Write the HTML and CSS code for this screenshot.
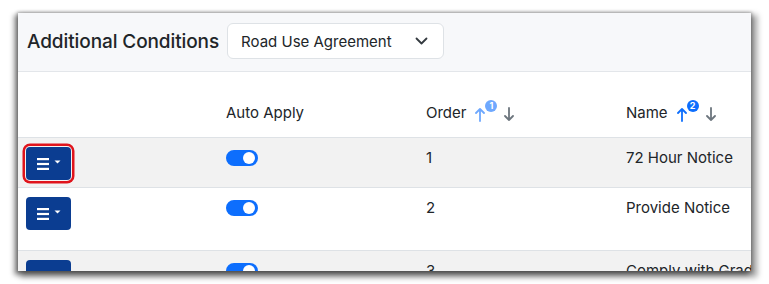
FILE: index.html
```html
<!DOCTYPE html>
<html>
<head>
<meta charset="utf-8">
<link rel="stylesheet" href="styles.css">
</head>
<body>
<div class="frame">
  <div class="card-header">
    <h2 class="title">Additional Conditions</h2>
    <div class="select">
      <span>Road Use Agreement</span>
      <svg class="chev" width="13" height="8" viewBox="0 0 13 8"><path d="M1.5 1.5 L6.5 6.5 L11.5 1.5" fill="none" stroke="#343a40" stroke-width="1.8" stroke-linecap="round" stroke-linejoin="round"/></svg>
    </div>
  </div>
  <table class="grid">
    <colgroup>
      <col class="c1"><col class="c2"><col class="c3"><col class="c4">
    </colgroup>
    <thead>
      <tr>
        <th></th>
        <th>Auto Apply</th>
        <th>
          <span class="th-sort">Order
            <span class="sort">
              <span class="up light">
                <svg width="10" height="15" viewBox="0 0 10 15"><path d="M5 14 V2 M1 6 L5 2 L9 6" fill="none" stroke="currentColor" stroke-width="1.8" stroke-linecap="round" stroke-linejoin="round"/></svg>
                <span class="badge light-b">1</span>
              </span>
              <span class="down">
                <svg width="10" height="15" viewBox="0 0 10 15"><path d="M5 1 V13 M1 9 L5 13 L9 9" fill="none" stroke="currentColor" stroke-width="1.8" stroke-linecap="round" stroke-linejoin="round"/></svg>
              </span>
            </span>
          </span>
        </th>
        <th>
          <span class="th-sort">Name
            <span class="sort">
              <span class="up dark">
                <svg width="10" height="15" viewBox="0 0 10 15"><path d="M5 14 V2 M1 6 L5 2 L9 6" fill="none" stroke="currentColor" stroke-width="1.8" stroke-linecap="round" stroke-linejoin="round"/></svg>
                <span class="badge dark-b">2</span>
              </span>
              <span class="down">
                <svg width="10" height="15" viewBox="0 0 10 15"><path d="M5 1 V13 M1 9 L5 13 L9 9" fill="none" stroke="currentColor" stroke-width="1.8" stroke-linecap="round" stroke-linejoin="round"/></svg>
              </span>
            </span>
          </span>
        </th>
      </tr>
    </thead>
    <tbody>
      <tr class="odd">
        <td class="btn-cell"><button class="menu-btn focused"><svg width="25" height="14" viewBox="0 0 25 14"><rect x="0" y="1" width="12" height="2.2" fill="#fff"/><rect x="0" y="5.9" width="12" height="2.2" fill="#fff"/><rect x="0" y="10.8" width="12" height="2.2" fill="#fff"/><path d="M17.5 3.5 L23.5 3.5 L20.5 6.5 Z" fill="#fff"/></svg></button></td>
        <td><span class="switch"><span class="knob"></span></span></td>
        <td>1</td>
        <td>72 Hour Notice</td>
      </tr>
      <tr class="tall">
        <td class="btn-cell"><button class="menu-btn"><svg width="25" height="14" viewBox="0 0 25 14"><rect x="0" y="1" width="12" height="2.2" fill="#fff"/><rect x="0" y="5.9" width="12" height="2.2" fill="#fff"/><rect x="0" y="10.8" width="12" height="2.2" fill="#fff"/><path d="M17.5 3.5 L23.5 3.5 L20.5 6.5 Z" fill="#fff"/></svg></button></td>
        <td><span class="switch"><span class="knob"></span></span></td>
        <td>2</td>
        <td>Provide Notice</td>
      </tr>
      <tr class="odd">
        <td class="btn-cell"><button class="menu-btn"><svg width="25" height="14" viewBox="0 0 25 14"><rect x="0" y="1" width="12" height="2.2" fill="#fff"/><rect x="0" y="5.9" width="12" height="2.2" fill="#fff"/><rect x="0" y="10.8" width="12" height="2.2" fill="#fff"/><path d="M17.5 3.5 L23.5 3.5 L20.5 6.5 Z" fill="#fff"/></svg></button></td>
        <td><span class="switch"><span class="knob"></span></span></td>
        <td>3</td>
        <td>Comply with Grading Requirements</td>
      </tr>
    </tbody>
  </table>
</div>
</body>
</html>
```

FILE: styles.css
```css
* { box-sizing: border-box; }
html, body { margin: 0; padding: 0; background: #ffffff; }
body {
  font-family: Inter, "Noto Sans", "Liberation Sans", sans-serif;
  color: #212529;
  padding: 13px 0 0 18px;
  height: 284px;
  overflow: hidden;
}
.frame {
  width: 733px;
  height: 258px;
  overflow: hidden;
  background: #fff;
  box-shadow: 0 0 3px 1px rgba(0,0,0,0.25), -3px 3px 5px 1px rgba(0,0,0,0.4), 4px 4px 6px 2px rgba(0,0,0,0.38);
}
.card-header {
  display: flex;
  align-items: center;
  gap: 8px;
  height: 59px;
  padding: 0 0 2px 9px;
  background: #f7f8fa;
  border-bottom: 1px solid #e3e6ea;
}
.title {
  margin: 0;
  font-size: 19px;
  font-weight: 500;
  color: #212529;
  letter-spacing: -0.1px;
}
.select {
  width: 217px;
  height: 36px;
  display: flex;
  align-items: center;
  justify-content: space-between;
  padding: 0 15px 0 13px;
  background: #fff;
  border: 1px solid #dee2e6;
  border-radius: 6px;
  font-size: 15px;
  color: #212529;
}
.chev { display: block; }
.grid {
  border-collapse: collapse;
  table-layout: fixed;
  width: 950px;
  font-size: 15px;
}
.c1 { width: 200px; }
.c2 { width: 200px; }
.c3 { width: 200px; }
.c4 { width: 350px; }
.grid th {
  text-align: left;
  font-weight: 400;
  padding: 29px 8px 12px;
  line-height: 24px;
  border-bottom: 1px solid #dee2e6;
  white-space: nowrap;
}
.grid td {
  padding: 8px 8px 8px;
  line-height: 24px;
  vertical-align: top;
  border-bottom: 1px solid #dee2e6;
  white-space: nowrap;
}
.grid td.btn-cell { padding: 9px 8px 7px; }
.grid tr.odd td { background: #f2f2f2; }
.grid tr.tall td { height: 63px; }
.th-sort {
  display: inline-flex;
  align-items: center;
}
.sort {
  display: inline-flex;
  align-items: center;
  margin-left: 9px;
  gap: 7px;
}
.up, .down {
  position: relative;
  display: inline-flex;
  align-items: center;
}
.up svg, .down svg { display: block; margin-top: 3px; }
.up { padding-right: 12px; }
.light { color: #6ea8fe; }
.dark { color: #0d6efd; }
.down { color: #6c757d; }
.badge {
  position: absolute;
  left: 10px;
  top: -4px;
  width: 12px;
  height: 12px;
  border-radius: 50%;
  color: #fff;
  font-size: 9px;
  font-weight: 700;
  line-height: 12px;
  text-align: center;
}
.light-b { background: #6ea8fe; }
.dark-b { background: #0d6efd; }
.menu-btn {
  display: flex;
  align-items: center;
  justify-content: center;
  width: 45px;
  height: 33px;
  padding: 0 0 0 1px;
  margin: 0;
  border: none;
  border-radius: 4px;
  background: #0b3d91;
  cursor: pointer;
}
.menu-btn svg { display: block; }
.focused {
  box-shadow: 0 0 0 1px #f4f4f4, 0 0 0 3.5px #e0141c;
}
.switch {
  display: block;
  position: relative;
  width: 32px;
  height: 16px;
  margin-top: 4px;
  border-radius: 8px;
  background: #0d6efd;
}
.knob {
  position: absolute;
  right: 3px;
  top: 2px;
  width: 12px;
  height: 12px;
  border-radius: 50%;
  background: #fff;
}
```
